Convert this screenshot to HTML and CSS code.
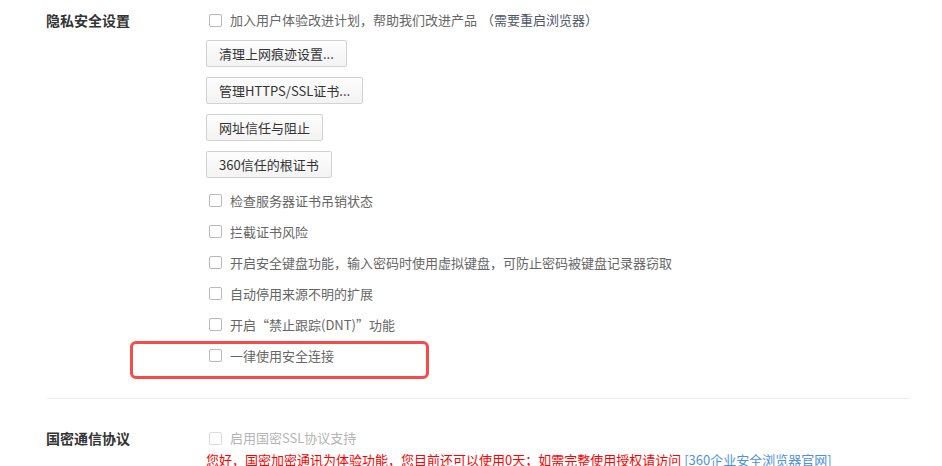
FILE: index.html
```html
<!DOCTYPE html>
<html lang="zh-CN">
<head>
    <meta charset="UTF-8">
    <meta name="viewport" content="width=device-width, initial-scale=1.0">
    <title>隐私安全设置</title>
    <link rel="stylesheet" href="styles.css">
</head>
<body>
    <div class="settings">
        <!-- 隐私安全设置 -->
        <div class="section">
            <div class="section-title">隐私安全设置</div>
            <div class="section-body">
                <label class="check-line">
                    <span class="checkbox"></span>
                    <span>加入用户体验改进计划，帮助我们改进产品</span>
                    <span class="note">（需要重启浏览器）</span>
                </label>

                <div class="buttons">
                    <button class="btn">清理上网痕迹设置...</button>
                    <button class="btn">管理HTTPS/SSL证书...</button>
                    <button class="btn">网址信任与阻止</button>
                    <button class="btn">360信任的根证书</button>
                </div>

                <div class="check-list">
                    <label class="check-row"><span class="checkbox"></span>检查服务器证书吊销状态</label>
                    <label class="check-row"><span class="checkbox"></span>拦截证书风险</label>
                    <label class="check-row"><span class="checkbox"></span>开启安全键盘功能，输入密码时使用虚拟键盘，可防止密码被键盘记录器窃取</label>
                    <label class="check-row"><span class="checkbox"></span>自动停用来源不明的扩展</label>
                    <label class="check-row"><span class="checkbox"></span>开启“禁止跟踪(DNT)”功能</label>
                    <label class="check-row highlighted">
                        <span class="checkbox"></span>一律使用安全连接
                        <span class="highlight-box"></span>
                    </label>
                </div>
            </div>
        </div>

        <div class="divider"></div>

        <!-- 国密通信协议 -->
        <div class="section section-gm">
            <div class="section-title">国密通信协议</div>
            <div class="section-body">
                <label class="check-line disabled">
                    <span class="checkbox"></span>
                    <span>启用国密SSL协议支持</span>
                </label>
                <div class="warn">您好，国密加密通讯为体验功能，您目前还可以使用0天；如需完整使用授权请访问 <a class="link" href="#">[360企业安全浏览器官网]</a></div>
            </div>
        </div>
    </div>
</body>
</html>
```

FILE: styles.css
```css
html, body {
    margin: 0;
    padding: 0;
    background: #ffffff;
}

body {
    font-family: "Noto Sans CJK SC", "Liberation Sans", sans-serif;
    font-size: 13px;
    color: #666666;
}

.settings {
    width: 864px;
    padding-left: 46px;
}

.section {
    display: flex;
    padding-top: 10px;
}

.section-title {
    width: 160px;
    flex-shrink: 0;
    font-size: 14px;
    font-weight: bold;
    color: #333333;
    line-height: 20px;
}

.section-body {
    flex: 1;
}

/* 复选框 */
.checkbox {
    display: inline-block;
    box-sizing: border-box;
    width: 13px;
    height: 13px;
    border: 1px solid #b9b9b9;
    border-radius: 2px;
    background: #ffffff;
    margin-right: 8px;
    flex-shrink: 0;
}

.check-line {
    display: flex;
    align-items: center;
    height: 20px;
    line-height: 20px;
    padding-left: 3px;
}

.note {
    color: #4f5866;
    margin-left: 4px;
}

.check-line.disabled {
    color: #b4b4b4;
}

.check-line.disabled .checkbox {
    border-color: #dcdcdc;
}

/* 按钮 */
.buttons {
    display: flex;
    flex-direction: column;
    align-items: flex-start;
    gap: 10px;
    margin-top: 10px;
}

.btn {
    height: 27px;
    box-sizing: border-box;
    padding: 0 12px;
    border: 1px solid #d2d2d2;
    border-radius: 2px;
    background: linear-gradient(#fdfdfd, #f3f3f3);
    font-family: "Noto Sans CJK SC", "Liberation Sans", sans-serif;
    font-size: 13px;
    color: #333333;
    line-height: 25px;
}

.check-list {
    margin-top: 7px;
}

.check-row {
    position: relative;
    display: flex;
    align-items: center;
    height: 31px;
    padding-left: 3px;
}

/* 红色标注框 */
.highlight-box {
    position: absolute;
    left: -76px;
    top: 1px;
    width: 299px;
    height: 38px;
    box-sizing: border-box;
    border: 3px solid #f44b4b;
    border-radius: 6px;
}

.divider {
    height: 1px;
    background: #eeeeee;
    margin-top: 27px;
}

.section-gm {
    padding-top: 29px;
}

.warn {
    color: #ff0000;
    line-height: 20px;
    margin-top: 2px;
    white-space: nowrap;
}

.link {
    color: #4d8fe6;
    text-decoration: none;
}
```
